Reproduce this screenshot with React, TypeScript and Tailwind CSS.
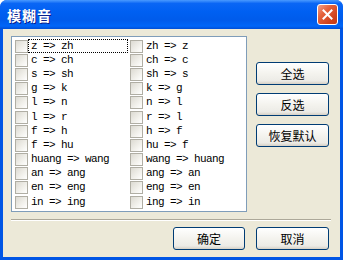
import React from "react";

const rows: [string, string][] = [
  ["z => zh", "zh => z"],
  ["c => ch", "ch => c"],
  ["s => sh", "sh => s"],
  ["g => k", "k => g"],
  ["l => n", "n => l"],
  ["l => r", "r => l"],
  ["f => h", "h => f"],
  ["f => hu", "hu => f"],
  ["huang => wang", "wang => huang"],
  ["an => ang", "ang => an"],
  ["en => eng", "eng => en"],
  ["in => ing", "ing => in"],
];

function Box() {
  return (
    <div className="w-[13px] h-[13px] shrink-0 border border-[#B0AEA4] bg-[linear-gradient(135deg,#DCDAD2_0%,#F2F1EC_60%,#FFFFFF_100%)]" />
  );
}

function Item({ text, focus }: { text: string; focus?: boolean }) {
  return (
    <div className="w-[115px] h-[14.2px] flex items-center">
      <Box />
      <div
        className={
          "h-[14px] flex items-center pl-[2px] " +
          (focus ? "w-[100px] border border-dotted border-black" : "border border-transparent")
        }
      >
        <span className="text-[11px] tracking-[-0.6px] text-black leading-none whitespace-pre [font-family:'Liberation_Mono',monospace]">
          {text}
        </span>
      </div>
    </div>
  );
}

function XPButton({ label, w = 73 }: { label: string; w?: number }) {
  return (
    <div
      style={{ width: w }}
      className="h-[23px] rounded-[3px] border border-[#003C74] bg-[linear-gradient(180deg,#FFFFFF_0%,#F4F3EE_50%,#ECEBE6_85%,#D6D0C5_100%)] flex items-center justify-center text-[12px] text-black [font-family:'Noto_Sans_CJK_SC',sans-serif]"
    >
      {label}
    </div>
  );
}

export default function App() {
  return (
    <div className="w-[343px] h-[260px] bg-white">
      <div className="w-[343px] h-[260px] rounded-t-[7px] bg-[#0055E5] flex flex-col overflow-hidden">
        <div className="h-[29px] shrink-0 flex items-center justify-between bg-[linear-gradient(180deg,#4A9AFF_0%,#0A66F5_12%,#0060F2_40%,#005BEB_70%,#0066F8_90%,#004ED6_100%)]">
          <span className="ml-[7px] mt-[1px] text-[14px] font-bold text-white [text-shadow:1px_1px_0_#0A1E8C] [font-family:'Noto_Sans_CJK_SC',sans-serif] tracking-[1px]">
            模糊音
          </span>
          <div className="mr-[5px] w-[21px] h-[21px] rounded-[3px] border border-white bg-[linear-gradient(135deg,#F0A08A_0%,#E5623C_35%,#D0421C_75%,#C23A18_100%)] flex items-center justify-center">
            <svg width="11" height="11" viewBox="0 0 11 11">
              <path d="M1.5 1.5 L9.5 9.5 M9.5 1.5 L1.5 9.5" stroke="white" strokeWidth="2" strokeLinecap="square" />
            </svg>
          </div>
        </div>
        <div className="mx-[3px] mb-[3px] flex-1 bg-[#ECE9D8] flex flex-col">
          <div className="flex pt-[7px] pl-[8px]">
            <div className="w-[236px] h-[176px] border border-[#7F9DB9] bg-white pl-[3px] pt-[2px]">
              {rows.map((r, i) => (
                <div key={i} className="flex">
                  <Item text={r[0]} focus={i === 0} />
                  <Item text={r[1]} />
                </div>
              ))}
            </div>
            <div className="ml-[9px] mt-[26px] flex flex-col gap-[8px]">
              <XPButton label="全选" />
              <XPButton label="反选" />
              <XPButton label="恢复默认" />
            </div>
          </div>
          <div className="mt-[7px] ml-[8px] w-[320px] h-[2px] border-t border-[#ACA899] border-b border-b-white" />
          <div className="mt-[6px] flex justify-end pr-[11px] gap-[11px]">
            <XPButton label="确定" w={72} />
            <XPButton label="取消" />
          </div>
        </div>
      </div>
    </div>
  );
}
